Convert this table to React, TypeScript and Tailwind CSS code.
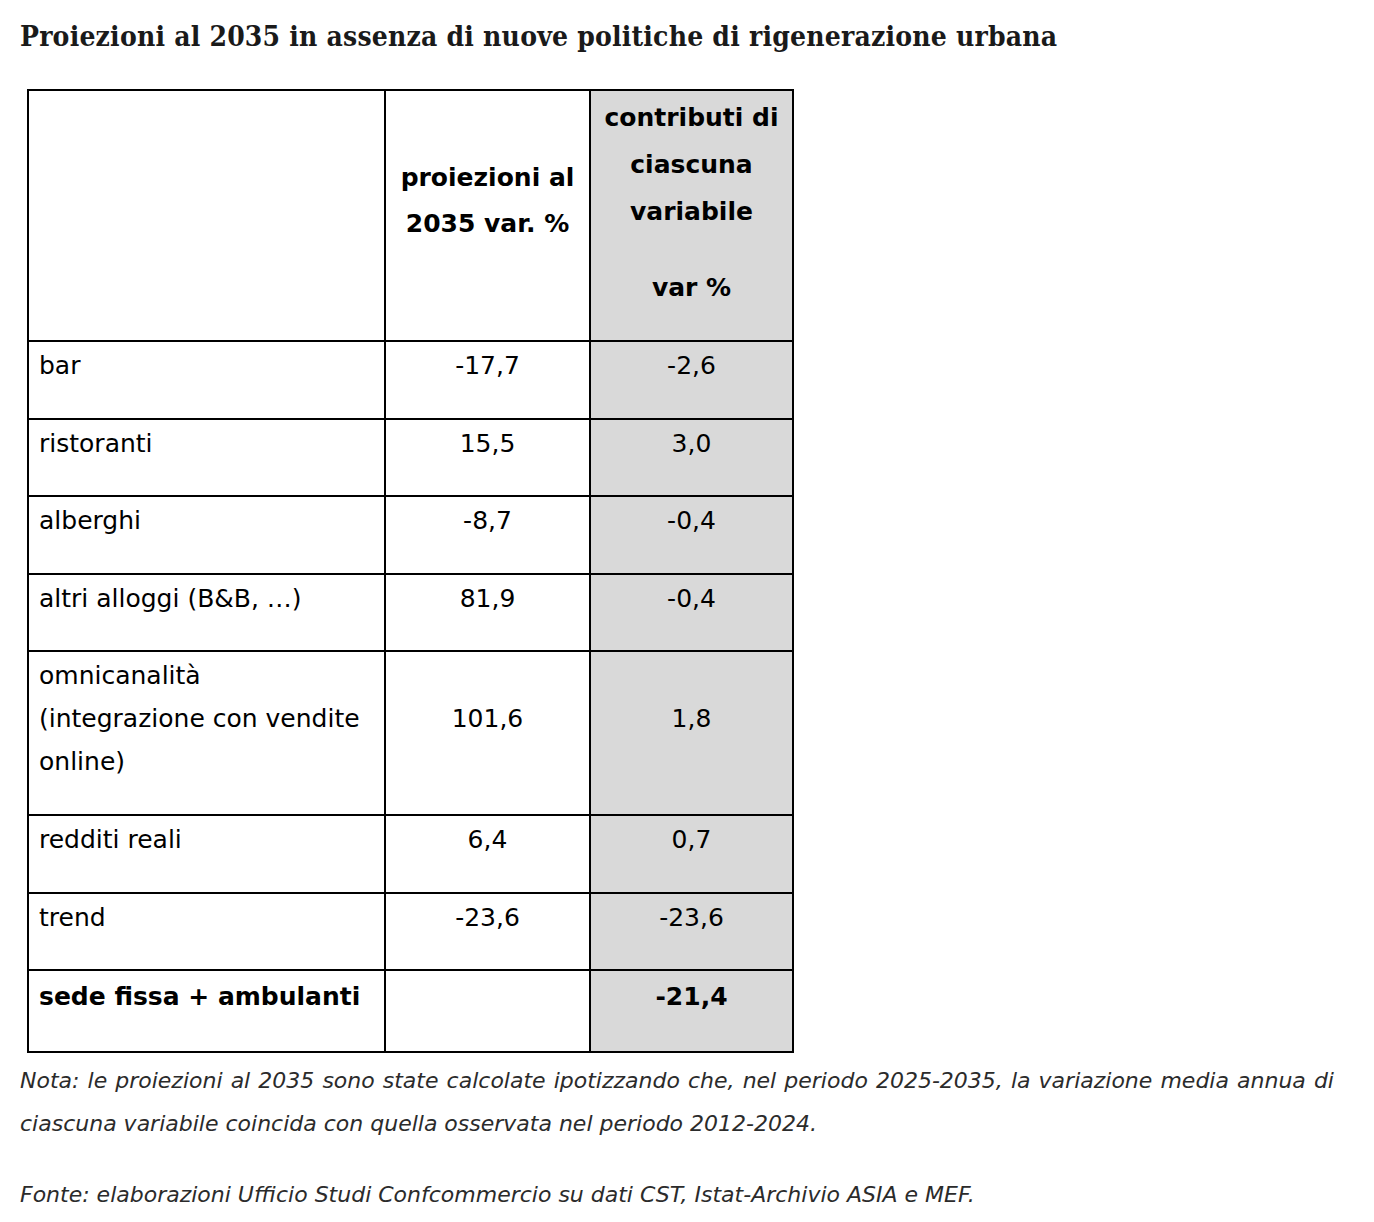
export default function App() {
  const rows = [
    { label: ["bar"], a: "-17,7", b: "-2,6" },
    { label: ["ristoranti"], a: "15,5", b: "3,0" },
    { label: ["alberghi"], a: "-8,7", b: "-0,4" },
    { label: ["altri alloggi (B&B, …)"], a: "81,9", b: "-0,4" },
    { label: ["omnicanalità", "(integrazione con vendite", "online)"], a: "101,6", b: "1,8" },
    { label: ["redditi reali"], a: "6,4", b: "0,7" },
    { label: ["trend"], a: "-23,6", b: "-23,6" },
  ]

  const cell = "border-2 border-black px-[10px] pt-[2px] pb-[30.6px] align-middle"

  return (
    <div className="bg-white min-h-[1222px] pl-[20px] pr-[40px] pt-[15px] text-black">
      <h1 className="font-['DejaVu_Serif_Condensed','DejaVu_Serif',serif] font-bold text-[28px] leading-[44px] tracking-[0.2px] text-[#1a1a1a]">
        Proiezioni al 2035 in assenza di nuove politiche di rigenerazione urbana
      </h1>

      <table className="mt-[30px] ml-[7px] border-collapse table-fixed w-[765px] font-['DejaVu_Sans',sans-serif] text-[25px] leading-[43px]">
        <colgroup>
          <col className="w-[357px]" />
          <col className="w-[205px]" />
          <col className="w-[203px]" />
        </colgroup>
        <thead>
          <tr className="h-[251px]">
            <th className={cell}></th>
            <th className={`${cell} text-center font-bold leading-[46px]`}>
              proiezioni al 2035 var. %
            </th>
            <th className={`${cell} bg-[#d9d9d9] text-center font-bold leading-[47px] !pb-[28px]`}>
              <div>contributi di ciascuna variabile</div>
              <div className="mt-[29px]">var %</div>
            </th>
          </tr>
        </thead>
        <tbody>
          {rows.map((r) => (
            <tr key={r.a + r.label[0]}>
              <td className={`${cell} text-left`}>
                {r.label.map((l) => (
                  <div key={l}>{l}</div>
                ))}
              </td>
              <td className={`${cell} text-center`}>{r.a}</td>
              <td className={`${cell} text-center bg-[#d9d9d9]`}>{r.b}</td>
            </tr>
          ))}
          <tr className="h-[82px]">
            <td className={`${cell} font-bold`}>sede fissa + ambulanti</td>
            <td className={cell}></td>
            <td className={`${cell} text-center font-bold bg-[#d9d9d9]`}>-21,4</td>
          </tr>
        </tbody>
      </table>

      <div className="mt-[6px] w-[1314px] font-['DejaVu_Sans',sans-serif] italic text-[22px] leading-[43px] text-[#2b2b2b]">
        <p className="text-justify">
          Nota: le proiezioni al 2035 sono state calcolate ipotizzando che, nel periodo 2025-2035, la variazione media annua di ciascuna variabile coincida con quella osservata nel periodo 2012-2024.
        </p>
        <p className="mt-[28px]">
          Fonte: elaborazioni Ufficio Studi Confcommercio su dati CST, Istat-Archivio ASIA e MEF.
        </p>
      </div>
    </div>
  )
}
